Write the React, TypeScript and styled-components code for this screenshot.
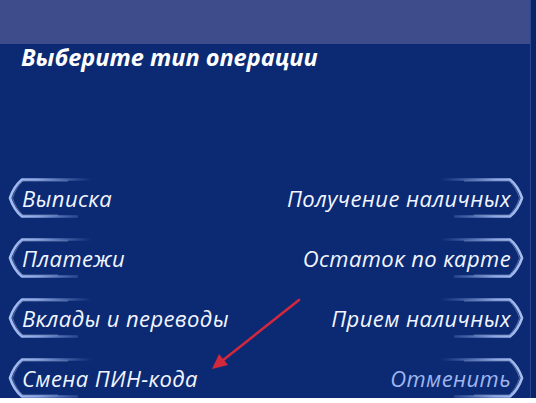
import { Fragment } from "react";
import styled, { createGlobalStyle } from "styled-components";

const GlobalStyle = createGlobalStyle`
  html, body {
    margin: 0;
    padding: 0;
    background: #ffffff;
  }
  body {
    font-family: "Open Sans", "Noto Sans", sans-serif;
  }
`;

const Screen = styled.div`
  position: relative;
  width: 536px;
  height: 398px;
  overflow: hidden;
  display: flex;
  background: #0b2a73;
`;

const Main = styled.div`
  flex: 1;
  display: flex;
  flex-direction: column;
  > * {
    flex-shrink: 0;
  }
`;

const RightEdge = styled.div`
  width: 5px;
  background: #0a2566;
  border-left: 1px solid #2b4690;
`;

const TopBar = styled.div`
  height: 44px;
  background: #3e4c8b;
`;

const Title = styled.h1`
  margin: 0;
  padding: 0 0 0 21px;
  height: 124px;
  font-family: "Open Sans", sans-serif;
  font-style: italic;
  font-weight: 700;
  font-size: 23.5px;
  line-height: 26px;
  color: #ffffff;
`;

const Menu = styled.div`
  display: grid;
  grid-template-columns: 1fr 1fr;
  grid-auto-rows: 60px;
  padding: 0 6px 0 8px;
`;

const Option = styled.div<{ $side: "left" | "right"; $muted?: boolean }>`
  position: relative;
  display: flex;
  align-items: center;
  justify-content: ${(p) => (p.$side === "left" ? "flex-start" : "flex-end")};
  padding: ${(p) => (p.$side === "left" ? "0 0 0 14px" : "0 13px 0 0")};
  height: 40px;
  align-self: center;
  font-family: "Open Sans", sans-serif;
  font-style: italic;
  font-size: 22px;
  letter-spacing: 0.4px;
  color: ${(p) => (p.$muted ? "#9fb6ee" : "#f2f5ff")};
  white-space: nowrap;
`;

const BracketSvg = styled.svg<{ $side: "left" | "right" }>`
  position: absolute;
  top: 0;
  ${(p) => (p.$side === "left" ? "left: 0;" : "right: 0; transform: scaleX(-1);")}
  width: 84px;
  height: 40px;
  pointer-events: none;
`;

function Bracket({ side, id }: { side: "left" | "right"; id: string }) {
  return (
    <BracketSvg $side={side} viewBox="0 0 84 40">
      <defs>
        <linearGradient id={id} x1="0" y1="0" x2="84" y2="0" gradientUnits="userSpaceOnUse">
          <stop offset="0" stopColor="#a9bff2" />
          <stop offset="0.35" stopColor="#8ea7e4" />
          <stop offset="1" stopColor="#6f8fd8" stopOpacity="0" />
        </linearGradient>
      </defs>
      <path
        d="M84 1.5 L14 1.5 Q 6 8 2 20 Q 6 32 14 38.5 L70 38.5"
        fill="none"
        stroke={`url(#${id})`}
        strokeWidth="2.6"
        strokeLinejoin="round"
      />
      <path
        d="M60 3 L15 3 Q 8 9 4.5 20 Q 8 31 15 37 L50 37"
        fill="none"
        stroke="#d9e4ff"
        strokeOpacity="0.35"
        strokeWidth="1"
      />
    </BracketSvg>
  );
}

const Arrow = styled.svg`
  position: absolute;
  left: 0;
  top: 0;
  width: 536px;
  height: 398px;
  pointer-events: none;
`;

const options: { left: string; right: string; mutedRight?: boolean }[] = [
  { left: "Выписка", right: "Получение наличных" },
  { left: "Платежи", right: "Остаток по карте" },
  { left: "Вклады и переводы", right: "Прием наличных" },
  { left: "Смена ПИН-кода", right: "Отменить", mutedRight: true },
];

export default function App() {
  return (
    <>
      <GlobalStyle />
      <Screen>
        <Main>
          <TopBar />
          <Title>Выберите тип операции</Title>
          <Menu>
            {options.map((o, i) => (
              <Fragment key={i}>
                <Option $side="left">
                  <Bracket side="left" id={`gl${i}`} />
                  {o.left}
                </Option>
                <Option $side="right" $muted={o.mutedRight}>
                  <Bracket side="right" id={`gr${i}`} />
                  {o.right}
                </Option>
              </Fragment>
            ))}
          </Menu>
        </Main>
        <RightEdge />
        <Arrow viewBox="0 0 536 398">
          <line x1="299" y1="300" x2="222" y2="361" stroke="#d3283c" strokeWidth="2.6" strokeLinecap="round" />
          <polygon points="212,369 219,354 228,365" fill="#d3283c" />
        </Arrow>
      </Screen>
    </>
  );
}
